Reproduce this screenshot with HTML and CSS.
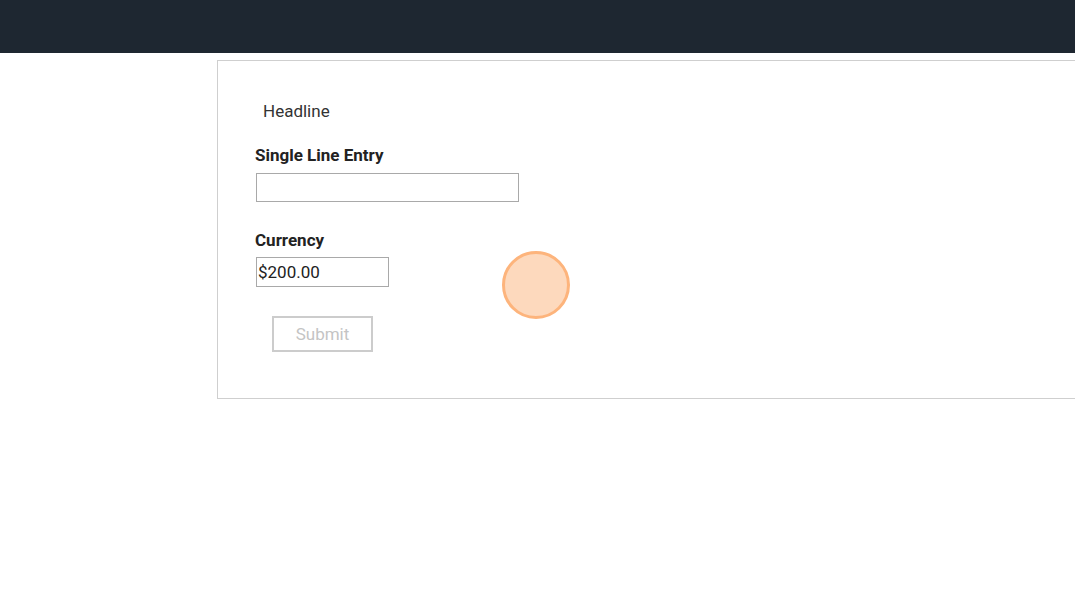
FILE: index.html
```html
<!DOCTYPE html>
<html>
<head>
<meta charset="utf-8">
<link rel="stylesheet" href="styles.css">
</head>
<body>
<header class="topbar"></header>
<main class="card">
  <div class="headline">Headline</div>
  <div class="field field-first">
    <label class="label label-first">Single Line Entry</label>
    <input class="input input-wide" type="text" value="">
  </div>
  <div class="field">
    <label class="label">Currency</label>
    <input class="input input-narrow" type="text" value="$200.00">
  </div>
  <button class="submit">Submit</button>
</main>
<div class="cursor-dot"></div>
</body>
</html>
```
FILE: styles.css
```css
html, body {
  margin: 0;
  padding: 0;
  background: #fff;
  overflow: hidden;
  font-family: Roboto, "Liberation Sans", sans-serif;
}
.topbar {
  height: 53px;
  background: #1e2731;
}
.card {
  box-sizing: border-box;
  margin: 7px 0 0 217px;
  width: 900px;
  height: 339px;
  border: 1px solid #cfcfcf;
  padding: 40px 0 0 37px;
  display: flex;
  flex-direction: column;
  align-items: flex-start;
}
.headline {
  font-size: 17px;
  line-height: 20px;
  color: #333;
  padding-left: 8px;
  margin-bottom: 24px;
}
.field {
  display: flex;
  flex-direction: column;
  align-items: flex-start;
  margin-bottom: 29px;
}
.field-first {
  margin-bottom: 28px;
}
.label {
  font-size: 17px;
  line-height: 20px;
  font-weight: bold;
  color: #222;
  margin-bottom: 7px;
}
.label-first {
  margin-bottom: 8px;
}
.input {
  box-sizing: border-box;
  margin: 0 0 0 1px;
  border: 1px solid #a9a9a9;
  padding: 0 1px;
  font-family: Roboto, "Liberation Sans", sans-serif;
  font-size: 17px;
  color: #222;
  outline: none;
  background: #fff;
}
.input-wide {
  width: 263px;
  height: 29px;
}
.input-narrow {
  width: 133px;
  height: 30px;
}
.submit {
  box-sizing: border-box;
  margin-left: 17px;
  width: 101px;
  height: 36px;
  border: 2px solid #cccccc;
  background: #fff;
  color: #c4c4c4;
  font-family: Roboto, "Liberation Sans", sans-serif;
  font-size: 17px;
  padding: 0;
}
.cursor-dot {
  position: absolute;
  left: 502px;
  top: 251px;
  width: 68px;
  height: 68px;
  box-sizing: border-box;
  border-radius: 50%;
  background: #fdd9bd;
  border: 3px solid #fdb47c;
}
```
